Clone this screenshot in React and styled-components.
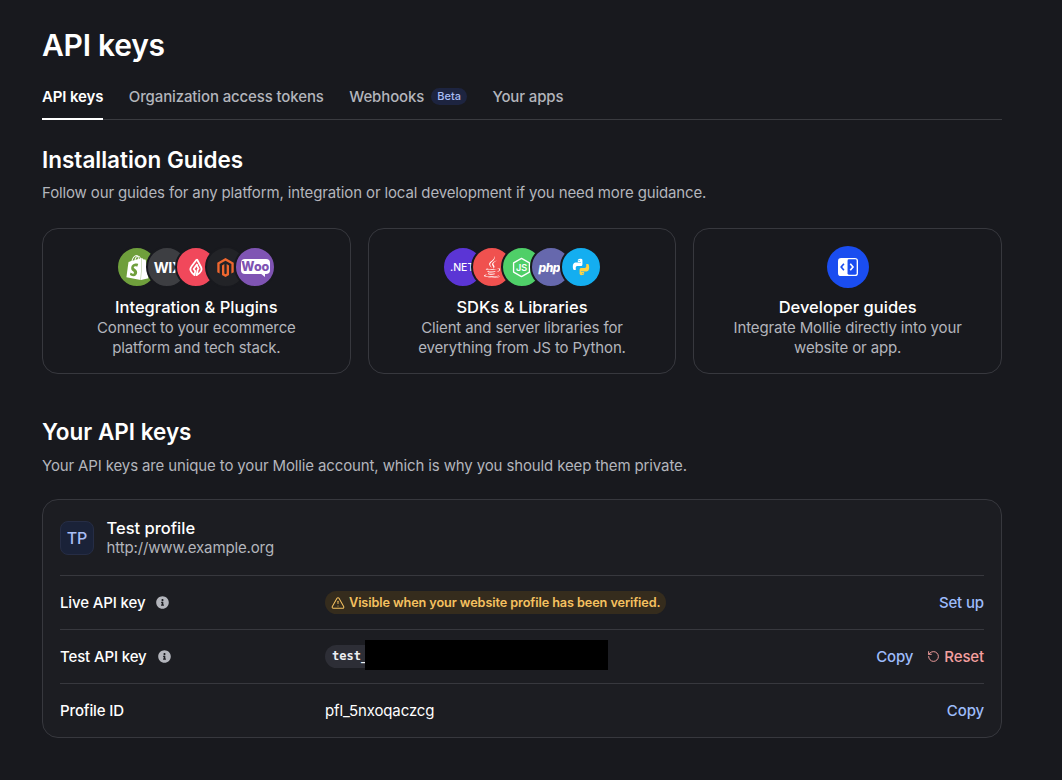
import React from 'react';
import styled, { createGlobalStyle } from 'styled-components';
import { RotateCcw, TriangleAlert } from 'lucide-react';
import { FaInfoCircle, FaJava } from 'react-icons/fa';
import { SiShopify, SiMagento } from 'react-icons/si';

const GlobalStyle = createGlobalStyle`
  html, body {
    margin: 0;
    padding: 0;
    background: #18191e;
  }
  body {
    font-family: Inter, "Liberation Sans", sans-serif;
    font-size: 15px;
    letter-spacing: -0.13px;
    color: #ffffff;
  }
  * { box-sizing: border-box; }
`;

const Page = styled.main`
  width: 1062px;
  min-height: 780px;
  padding: 25px 60px 42px 42px;
`;

const Title = styled.h1`
  margin: 0;
  font-size: 30px;
  line-height: 40px;
  font-weight: 600;
  letter-spacing: -0.25px;
`;

const Tabs = styled.nav`
  display: flex;
  align-items: stretch;
  gap: 25.5px;
  height: 45px;
  margin-top: 10px;
  border-bottom: 1px solid #3a3b40;
`;

const Tab = styled.a`
  display: flex;
  align-items: center;
  gap: 7px;
  height: 45px;
  padding-bottom: 1px;
  font-weight: ${p => (p.$active ? 600 : 500)};
  color: ${p => (p.$active ? '#ffffff' : '#b3b5bc')};
  border-bottom: 2px solid ${p => (p.$active ? '#ffffff' : 'transparent')};
`;

const Badge = styled.span`
  height: 17px;
  padding: 0 6px;
  border-radius: 9px;
  background: #1d2440;
  color: #a8bdf5;
  font-size: 11px;
  font-weight: 500;
  line-height: 17px;
  letter-spacing: 0;
`;

const SectionTitle = styled.h2`
  margin: ${p => p.$top}px 0 0;
  font-size: 22.5px;
  line-height: 32px;
  font-weight: 600;
  letter-spacing: 0;
`;

const SectionText = styled.p`
  margin: ${p => p.$top}px 0 0;
  font-size: 15px;
  line-height: 24px;
  color: #b3b5bc;
`;

const Guides = styled.div`
  display: grid;
  grid-template-columns: repeat(3, 1fr);
  gap: 17px;
  margin-top: 23px;
`;

const GuideCard = styled.a`
  display: flex;
  flex-direction: column;
  align-items: center;
  height: 146px;
  padding-top: 17px;
  border: 1px solid #37383e;
  border-radius: 16px;
  text-align: center;
`;

const LogoStack = styled.div`
  display: flex;
  justify-content: center;
  height: 42px;
  margin-bottom: 8px;
`;

const Logo = styled.span`
  display: flex;
  align-items: center;
  justify-content: ${p => p.$justify || 'center'};
  flex: none;
  width: 42px;
  height: 42px;
  margin-left: -12.5px;
  padding-left: ${p => p.$inset || 0}px;
  border: 2px solid #18191e;
  border-radius: 50%;
  background: ${p => p.$bg};
  color: ${p => p.$fg || '#ffffff'};
  overflow: hidden;
  letter-spacing: 0;
  &:first-child { margin-left: 0; }
`;

const LogoWord = styled.span`
  font-size: ${p => p.$size}px;
  font-weight: ${p => p.$weight || 600};
  font-style: ${p => (p.$italic ? 'italic' : 'normal')};
  letter-spacing: ${p => p.$spacing || 0}px;
  white-space: nowrap;
`;

const WooBubble = styled.span`
  position: relative;
  display: flex;
  align-items: center;
  justify-content: center;
  width: 29px;
  height: 15px;
  margin-top: -2px;
  border-radius: 4px;
  background: #ffffff;
  color: #7f54b3;
  font-size: 12.5px;
  font-weight: 800;
  &::after {
    content: '';
    position: absolute;
    right: 5px;
    bottom: -3px;
    border-top: 4px solid #ffffff;
    border-left: 5px solid transparent;
  }
`;

const GuideIcon = styled.span`
  display: flex;
  align-items: center;
  justify-content: center;
  width: 42px;
  height: 42px;
  border-radius: 50%;
  background: #1a4df0;
`;

const GuideTitle = styled.div`
  font-size: 16.5px;
  line-height: 20px;
  font-weight: 500;
  letter-spacing: 0;
  margin-top: 1px;
`;

const GuideText = styled.div`
  margin-top: 1px;
  line-height: 20px;
  color: #b3b5bc;
`;

const ProfileCard = styled.section`
  margin-top: 21px;
  height: 239px;
  padding: 0 17px;
  background: #1c1d22;
  border: 1px solid #37383e;
  border-radius: 16px;
`;

const ProfileHead = styled.header`
  display: flex;
  align-items: center;
  gap: 12.5px;
  height: 75px;
  padding-top: 1px;
`;

const Avatar = styled.span`
  display: flex;
  align-items: center;
  justify-content: center;
  width: 34px;
  height: 34px;
  border: 1px solid #262d45;
  border-radius: 8px;
  background: #1a2238;
  color: #a8bdf5;
  font-size: 16px;
  font-weight: 500;
  letter-spacing: 0;
`;

const ProfileName = styled.div`
  font-size: 16.5px;
  line-height: 20px;
  font-weight: 500;
  letter-spacing: 0;
`;

const ProfileUrl = styled.div`
  line-height: 20px;
  color: #b3b5bc;
`;

const Row = styled.div`
  display: grid;
  grid-template-columns: 265px 1fr auto;
  align-items: center;
  height: 54px;
  border-top: 1px solid #37383e;
`;

const RowLabel = styled.div`
  display: flex;
  align-items: center;
  gap: 11px;
  font-weight: 500;
`;

const InfoIcon = styled(FaInfoCircle)`
  width: 13px;
  height: 13px;
  color: #b3b5bc;
`;

const Notice = styled.span`
  display: inline-flex;
  align-items: center;
  gap: 4px;
  height: 23px;
  padding: 0 6px;
  border-radius: 12px;
  background: #352c1d;
  color: #f5c160;
  font-size: 12.7px;
  font-weight: 600;
  letter-spacing: -0.1px;
`;

const KeyValue = styled.div`
  display: flex;
  align-items: center;
`;

const KeyPill = styled.code`
  display: block;
  width: 56px;
  height: 23px;
  padding: 0 7px;
  border-radius: 12px;
  background: #2d2e36;
  color: #eeeff2;
  font-family: "DejaVu Sans Mono", "Liberation Mono", monospace;
  font-size: 12px;
  font-weight: 700;
  line-height: 23px;
  letter-spacing: 0;
`;

const Redaction = styled.span`
  display: block;
  width: 243px;
  height: 30px;
  margin: 0 0 3px -16px;
  background: #000000;
`;

const Actions = styled.div`
  display: flex;
  align-items: center;
  gap: 14px;
`;

const Action = styled.a`
  display: flex;
  align-items: center;
  gap: 4px;
  font-weight: 500;
  color: ${p => (p.$danger ? '#f5a0a0' : '#9dbcfb')};
`;

const LightspeedMark = () => (
  <svg width="15" height="18" viewBox="0 0 18 22" fill="none" stroke="#fff" strokeWidth="2.2" strokeLinejoin="round">
    <path d="M9.500 1.500 3 10c-2 2.600-1.600 6 .6 8.200L6.500 21l1-5-2-2.500L10 7.500" />
    <path d="M9.500 1.500 14.500 11c1.200 2.600.6 5.300-1.600 7.200L9 21l1.500-6.500 1-1.500L9 8" />
  </svg>
);

const JsMark = () => (
  <svg width="19" height="21" viewBox="0 0 24 26" fill="none">
    <path d="M12 1.500 22 7.200v11.600L12 24.500 2 18.800V7.200z" stroke="#fff" strokeWidth="1.700" strokeLinejoin="round" />
    <text x="12" y="17.500" textAnchor="middle" fontSize="11.500" fontWeight="600" fill="#fff" fontFamily="Inter, sans-serif">JS</text>
  </svg>
);

const PythonMark = () => (
  <svg width="18" height="18" viewBox="0 0 24 24">
    <path fill="#ffffff" d="M11.900 1C7.600 1 7.800 2.900 7.800 2.900v2.400H12v.7H5.200C3 6 1.100 7.300 1.100 11.700c0 4.400 1.800 4.300 1.800 4.300H5v-2.900s-.1-2.300 2.300-2.300h4.400s2.200 0 2.200-2.100V3.200S14.200 1 11.900 1zM9.500 2.500a.8.8 0 1 1 0 1.600.8.8 0 0 1 0-1.600z" />
    <path fill="#ffd343" d="M12.100 23c4.300 0 4.100-1.900 4.100-1.900v-2.400H12V18h6.800c2.200 0 4.100-1.300 4.100-5.700 0-4.400-1.800-4.300-1.800-4.300H19v2.900s.1 2.300-2.300 2.300h-4.400s-2.200 0-2.200 2.100v4.500S9.800 23 12.100 23zm2.400-1.500a.8.8 0 1 1 0-1.600.8.8 0 0 1 0 1.600z" />
  </svg>
);

const GuidesMark = () => (
  <svg width="22" height="20" viewBox="0 0 24 22">
    <rect x="1" y="1" width="22" height="20" rx="3.500" fill="#fff" />
    <rect x="11.500" y="2.500" width="10" height="17" rx="1.500" fill="#1a4df0" />
    <path d="M7.500 7.500 4.500 11l3 3.500" fill="none" stroke="#1a4df0" strokeWidth="1.800" />
    <path d="M14.500 7.500l3 3.500-3 3.500" fill="none" stroke="#fff" strokeWidth="1.800" />
  </svg>
);

const guides = [
  {
    title: 'Integration & Plugins',
    lines: ['Connect to your ecommerce', 'platform and tech stack.'],
    logos: [
      { key: 'shopify', bg: '#6f9f3c', node: <SiShopify size={25} /> },
      { key: 'wix', bg: '#3d3e42', justify: 'flex-start', inset: 6, node: <LogoWord $size={14.5} $weight={700} $spacing={-0.5}>WIX</LogoWord> },
      { key: 'lightspeed', bg: '#f1485b', node: <LightspeedMark /> },
      { key: 'magento', bg: '#222327', fg: '#ee672f', node: <SiMagento size={19} /> },
      { key: 'woo', bg: '#7f54b3', node: <WooBubble>Woo</WooBubble> },
    ],
  },
  {
    title: 'SDKs & Libraries',
    lines: ['Client and server libraries for', 'everything from JS to Python.'],
    logos: [
      { key: 'dotnet', bg: '#5b35d5', justify: 'flex-start', inset: 6, node: <LogoWord $size={10.5} $weight={500}>.NET</LogoWord> },
      { key: 'java', bg: '#f0514f', node: <FaJava size={22} /> },
      { key: 'node', bg: '#4fcf68', node: <JsMark /> },
      { key: 'php', bg: '#6668ad', justify: 'flex-start', inset: 6, node: <LogoWord $size={12} $weight={800} $spacing={-0.5} $italic>php</LogoWord> },
      { key: 'python', bg: '#14aef0', node: <PythonMark /> },
    ],
  },
];

const App = () => (
  <>
    <GlobalStyle />
    <Page>
      <Title>API keys</Title>
      <Tabs>
        <Tab $active>API keys</Tab>
        <Tab>Organization access tokens</Tab>
        <Tab>Webhooks <Badge>Beta</Badge></Tab>
        <Tab>Your apps</Tab>
      </Tabs>

      <SectionTitle $top={24}>Installation Guides</SectionTitle>
      <SectionText $top={5}>Follow our guides for any platform, integration or local development if you need more guidance.</SectionText>

      <Guides>
        {guides.map(guide => (
          <GuideCard key={guide.title}>
            <LogoStack>
              {guide.logos.map(logo => (
                <Logo key={logo.key} $bg={logo.bg} $fg={logo.fg} $justify={logo.justify} $inset={logo.inset}>{logo.node}</Logo>
              ))}
            </LogoStack>
            <GuideTitle>{guide.title}</GuideTitle>
            <GuideText>{guide.lines[0]}<br />{guide.lines[1]}</GuideText>
          </GuideCard>
        ))}
        <GuideCard>
          <LogoStack>
            <GuideIcon><GuidesMark /></GuideIcon>
          </LogoStack>
          <GuideTitle>Developer guides</GuideTitle>
          <GuideText>Integrate Mollie directly into your<br />website or app.</GuideText>
        </GuideCard>
      </Guides>

      <SectionTitle $top={42}>Your API keys</SectionTitle>
      <SectionText $top={6}>Your API keys are unique to your Mollie account, which is why you should keep them private.</SectionText>

      <ProfileCard>
        <ProfileHead>
          <Avatar>TP</Avatar>
          <div>
            <ProfileName>Test profile</ProfileName>
            <ProfileUrl>http://www.example.org</ProfileUrl>
          </div>
        </ProfileHead>
        <Row>
          <RowLabel>Live API key <InfoIcon /></RowLabel>
          <div>
            <Notice><TriangleAlert size={14} strokeWidth={1.75} />Visible when your website profile has been verified.</Notice>
          </div>
          <Actions><Action>Set up</Action></Actions>
        </Row>
        <Row>
          <RowLabel>Test API key <InfoIcon /></RowLabel>
          <KeyValue>
            <KeyPill>test_</KeyPill>
            <Redaction />
          </KeyValue>
          <Actions>
            <Action>Copy</Action>
            <Action $danger><RotateCcw size={13} strokeWidth={1.75} />Reset</Action>
          </Actions>
        </Row>
        <Row>
          <RowLabel>Profile ID</RowLabel>
          <div>pfl_5nxoqaczcg</div>
          <Actions><Action>Copy</Action></Actions>
        </Row>
      </ProfileCard>
    </Page>
  </>
);

export default App;
